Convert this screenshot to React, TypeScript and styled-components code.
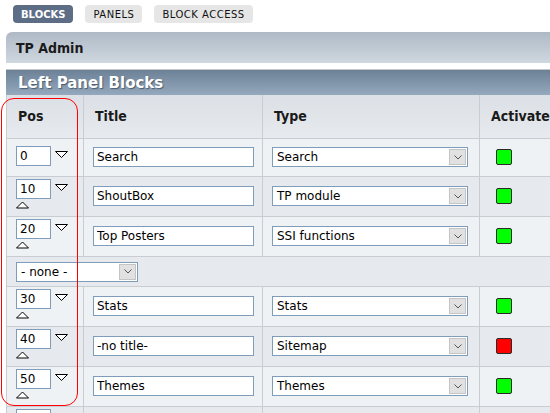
import React from 'react';
import styled, { createGlobalStyle } from 'styled-components';

const GlobalStyle = createGlobalStyle`
  html, body {
    margin: 0;
    padding: 0;
    background: #fff;
    overflow: hidden;
  }
  body {
    font-family: 'DejaVu Sans', Verdana, sans-serif;
    font-size: 12px;
    color: #000;
  }
`;

interface TabProps {
  active?: boolean,
}

interface RowProps {
  alt?: boolean,
}

interface BoxProps {
  width: number,
}

interface LampProps {
  on: boolean,
}

const Page = styled.div`
  position: relative;
  width: 620px;
  padding-top: 5px;
`;

const TabBar = styled.div`
  display: flex;
  gap: 12px;
  padding-left: 13px;
  margin-bottom: 9px;
`;

const Tab = styled.span<TabProps>`
  display: inline-block;
  height: 18px;
  line-height: 19px;
  padding: 0 8px;
  border-radius: 4px;
  font-size: 10px;
  letter-spacing: ${props => (props.active ? '0' : '0.5px')};
  font-weight: ${props => (props.active ? 'bold' : 'normal')};
  color: ${props => (props.active ? '#fff' : '#111')};
  background: ${props => (props.active ? '#5d6d86' : '#e6e6e6')};
`;

const AdminBar = styled.h3`
  margin: 0 0 6px 6px;
  height: 31px;
  display: flex;
  align-items: center;
  padding-left: 10px;
  border-top-left-radius: 6px;
  background: linear-gradient(#afb9c5, #cfd8e0);
  font-family: 'DejaVu Sans Condensed', 'DejaVu Sans', sans-serif;
  font-stretch: condensed;
  font-size: 14px;
  font-weight: bold;
  color: #1a1a1a;
`;

const Panel = styled.div`
  margin-left: 6px;
  border-top: 1px solid #c8c8c8;
`;

const PanelTitle = styled.h3`
  margin: 0;
  height: 25px;
  display: flex;
  align-items: center;
  padding-left: 12px;
  background: linear-gradient(#6c8197, #95a9bd);
  color: #fff;
  font-size: 15px;
  font-weight: bold;
  text-shadow: 1px 1px 1px #4b5d70;
`;

const Grid = styled.table`
  width: 614px;
  table-layout: fixed;
  border-collapse: collapse;
`;

const HeadRow = styled.tr`
  height: 43px;
  background: linear-gradient(#dbe0e6, #e7eaee);
`;

const HeadCell = styled.th`
  border: 1px solid #c9cdd2;
  border-top: none;
  padding: 0 0 0 11px;
  text-align: left;
  font-family: 'DejaVu Sans Condensed', 'DejaVu Sans', sans-serif;
  font-stretch: condensed;
  font-size: 14px;
  font-weight: bold;
  color: #1a1a1a;
`;

const Row = styled.tr<RowProps>`
  height: 40px;
  background: ${props => (props.alt ? '#e6e9ee' : '#eef2f5')};
`;

const FirstRow = styled(Row)`
  height: 38px;
`;

const Cell = styled.td`
  border: 1px solid #c9cdd2;
  padding: 0 0 0 9px;
  vertical-align: middle;
`;

const PosCell = styled(Cell)`
  padding-top: 2px;
  padding-bottom: 3px;
`;

const LampCell = styled(Cell)`
  padding-left: 16px;
`;

const DividerCell = styled.td`
  border: 1px solid #c9cdd2;
  padding: 5px 9px 4px;
  background: #e6e9ee;
`;

const PosLine = styled.div`
  display: flex;
  align-items: flex-start;
  gap: 4px;
  height: 22px;
`;

const ArrowLine = styled.div`
  height: 11px;
  display: flex;
  align-items: flex-start;
`;

const DownArrow = styled.svg`
  margin-top: 5px;
`;

const TextInput = styled.input<BoxProps>`
  box-sizing: border-box;
  width: ${props => props.width}px;
  height: 20px;
  margin: 0;
  padding: 0 3px;
  border: 1px solid #7f9db9;
  background: #fff;
  font-family: 'DejaVu Sans', Verdana, sans-serif;
  font-size: 12px;
  color: #000;
  outline: none;
`;

const SelectBox = styled.div<BoxProps>`
  box-sizing: border-box;
  width: ${props => props.width}px;
  height: 20px;
  display: flex;
  align-items: stretch;
  border: 1px solid #7f9db9;
  background: #fff;
`;

const SelectText = styled.span`
  flex: 1;
  padding-left: 4px;
  line-height: 18px;
  font-size: 12px;
  white-space: nowrap;
  overflow: hidden;
`;

const SelectButton = styled.span`
  box-sizing: border-box;
  width: 17px;
  margin: 1px;
  display: flex;
  align-items: center;
  justify-content: center;
  background: #e1e1e1;
  border: 1px solid #c4c4c4;
`;

const Lamp = styled.span<LampProps>`
  display: block;
  box-sizing: border-box;
  width: 16px;
  height: 16px;
  border: 1px solid #2a2a2a;
  border-radius: 2px;
  background: ${props => (props.on ? '#00ff00' : '#ff0000')};
`;

const Highlight = styled.div`
  position: absolute;
  left: 1px;
  top: 98px;
  width: 75px;
  height: 306px;
  border: 1px solid #f00;
  border-radius: 13px;
  pointer-events: none;
`;

interface Block {
  pos: number,
  title: string,
  type: string,
  active: boolean,
}

const topBlocks: Block[] = [
  { pos: 0, title: 'Search', type: 'Search', active: true },
  { pos: 10, title: 'ShoutBox', type: 'TP module', active: true },
  { pos: 20, title: 'Top Posters', type: 'SSI functions', active: true },
];

const lowerBlocks: Block[] = [
  { pos: 30, title: 'Stats', type: 'Stats', active: true },
  { pos: 40, title: '-no title-', type: 'Sitemap', active: false },
  { pos: 50, title: 'Themes', type: 'Themes', active: true },
  { pos: 60, title: 'Online', type: 'Online', active: true },
];

const Chevron = () => (
  <svg width="8" height="5" viewBox="0 0 8 5">
    <polyline points="0.5,0.5 4,4 7.5,0.5" fill="none" stroke="#555" strokeWidth="1" />
  </svg>
);

const Select = ({ value, width }: { value: string, width: number }) => (
  <SelectBox width={width}>
    <SelectText>{value}</SelectText>
    <SelectButton><Chevron /></SelectButton>
  </SelectBox>
);

const BlockRow = ({ block, first, alt }: { block: Block, first?: boolean, alt?: boolean }) => {
  const RowTag = first ? FirstRow : Row;
  return (
    <RowTag alt={alt}>
      <PosCell>
        <PosLine>
          <TextInput width={35} defaultValue={String(block.pos)} />
          <DownArrow width="13" height="8" viewBox="0 0 13 8">
            <polygon points="0.5,0.5 12.5,0.5 6.5,6.5" fill="#fff" stroke="#000" strokeWidth="1" />
          </DownArrow>
        </PosLine>
        {!first && (
          <ArrowLine>
            <svg width="13" height="8" viewBox="0 0 13 8">
              <polygon points="0.5,7 12.5,7 6.5,1" fill="#fff" stroke="#000" strokeWidth="1" />
            </svg>
          </ArrowLine>
        )}
      </PosCell>
      <Cell>
        <TextInput width={161} defaultValue={block.title} />
      </Cell>
      <Cell>
        <Select value={block.type} width={196} />
      </Cell>
      <LampCell>
        <Lamp on={block.active} />
      </LampCell>
    </RowTag>
  );
};

export default function App() {
  return (
    <Page>
      <GlobalStyle />
      <TabBar>
        <Tab active>BLOCKS</Tab>
        <Tab>PANELS</Tab>
        <Tab>BLOCK ACCESS</Tab>
      </TabBar>
      <AdminBar>TP Admin</AdminBar>
      <Panel>
        <PanelTitle>Left Panel Blocks</PanelTitle>
        <Grid>
          <colgroup>
            <col style={{ width: 77 }} />
            <col style={{ width: 179 }} />
            <col style={{ width: 217 }} />
            <col />
          </colgroup>
          <tbody>
            <HeadRow>
              <HeadCell>Pos</HeadCell>
              <HeadCell>Title</HeadCell>
              <HeadCell>Type</HeadCell>
              <HeadCell>Activate</HeadCell>
            </HeadRow>
            {topBlocks.map((block, i) => (
              <BlockRow key={block.pos} block={block} first={i === 0} alt={i % 2 === 1} />
            ))}
            <tr>
              <DividerCell colSpan={4}>
                <Select value="- none -" width={122} />
              </DividerCell>
            </tr>
            {lowerBlocks.map((block, i) => (
              <BlockRow key={block.pos} block={block} alt={i % 2 === 1} />
            ))}
          </tbody>
        </Grid>
      </Panel>
      <Highlight />
    </Page>
  );
}
